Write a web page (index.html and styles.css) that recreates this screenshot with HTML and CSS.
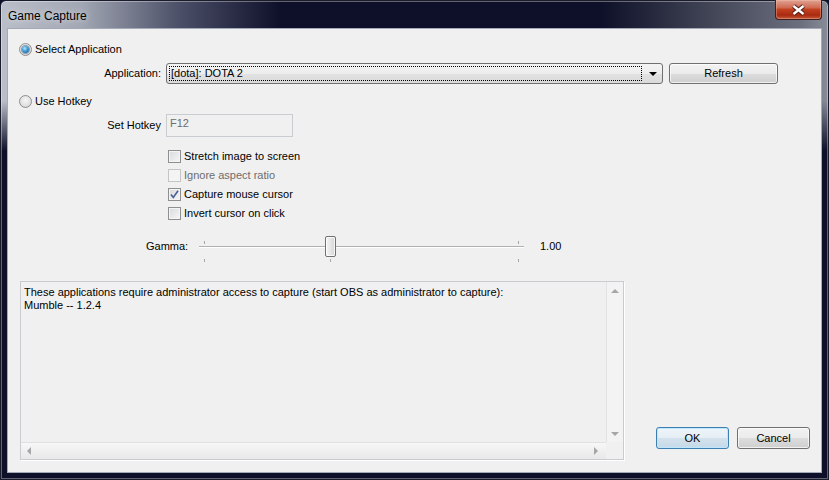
FILE: index.html
```html
<!DOCTYPE html>
<html>
<head>
    <title>Game Capture</title>
    <link rel="stylesheet" href="styles.css">
</head>
<body>
    <div class="window">
        <div class="titlebar">
            <span class="title">Game Capture</span>
            <div class="close">
                <svg width="15" height="12" viewBox="0 0 15 12">
                    <path d="M2.5 2 L12.5 10 M12.5 2 L2.5 10" stroke="#4a1f18" stroke-width="4.4"/>
                    <path d="M2.5 2 L12.5 10 M12.5 2 L2.5 10" stroke="#fff" stroke-width="2.4"/>
                </svg>
            </div>
        </div>
        <div class="client">
            <div class="radio-row first"><span class="radio checked"></span>Select Application</div>
            <div class="field-row app-row">
                <span class="label">Application:</span>
                <div class="combo">
                    <span class="focus">[dota]: DOTA 2</span>
                    <span class="arrow"></span>
                </div>
                <div class="btn refresh">Refresh</div>
            </div>
            <div class="radio-row hotkey-radio"><span class="radio"></span>Use Hotkey</div>
            <div class="field-row hotkey-row">
                <span class="label">Set Hotkey</span>
                <div class="hotkey">F12</div>
            </div>
            <div class="checks">
                <div class="check-row"><span class="checkbox"></span>Stretch image to screen</div>
                <div class="check-row disabled"><span class="checkbox"></span>Ignore aspect ratio</div>
                <div class="check-row">
                    <span class="checkbox">
                        <svg width="9" height="9" viewBox="0 0 9 9">
                            <path d="M1 4.5 L3.3 7.5 L8 0.8" fill="none" stroke="#4a5f97" stroke-width="1.6"/>
                        </svg>
                    </span>Capture mouse cursor
                </div>
                <div class="check-row"><span class="checkbox"></span>Invert cursor on click</div>
            </div>
            <div class="gamma-row">
                <span class="gamma-label">Gamma:</span>
                <div class="slider">
                    <div class="ticks first"></div>
                    <div class="track"></div>
                    <div class="ticks"></div>
                    <span class="thumb"></span>
                </div>
                <span class="gamma-value">1.00</span>
            </div>
            <div class="bottom">
                <div class="log">
                    <div class="log-text">These applications require administrator access to capture (start OBS as administrator to capture):<br>Mumble -- 1.2.4</div>
                    <div class="vbar"><span class="arr up"></span><span class="arr down"></span></div>
                    <div class="hbar"><span class="arr left"></span><span class="arr right"></span></div>
                    <div class="corner"></div>
                </div>
                <div class="actions">
                    <div class="btn default">OK</div>
                    <div class="btn">Cancel</div>
                </div>
            </div>
        </div>
    </div>
</body>
</html>
```

FILE: styles.css
```css
body {
    margin: 0;
    padding: 0;
    font-family: "Liberation Sans", Arial, sans-serif;
    font-size: 11px;
    line-height: 13px;
    color: #000;
    background: #0d1028;
}

.window {
    width: 829px;
    height: 480px;
    box-sizing: border-box;
    padding: 0 6px 6px 6px;
    border: 1px solid #1a1c2c;
    border-radius: 6px 6px 0 0;
    box-shadow: inset 0 0 0 1px rgba(255, 255, 255, 0.35);
    background:
        linear-gradient(180deg, rgba(13, 16, 40, 0) 100px, #0d1028 150px),
        linear-gradient(90deg, #b9bec8 0, #a2a7b4 80px, #4a4e66 180px, #0d1028 280px, #0d1028 600px, #3e4152 700px, #6c6f7e 800px, #8a8d99 829px);
}

/* title bar */
.titlebar {
    height: 27px;
    display: flex;
    justify-content: space-between;
    align-items: flex-start;
    margin: 0 -6px;
    padding: 0 6px 0 7px;
}

.title {
    font-size: 12px;
    line-height: 14px;
    padding-top: 8px;
    color: #000;
    text-shadow: 0 0 6px rgba(255, 255, 255, 0.8);
}

.close {
    width: 45px;
    height: 19px;
    margin-top: -1px;
    border: 1px solid #3e2020;
    border-top: none;
    border-radius: 0 0 4px 4px;
    background: linear-gradient(180deg, #e0a494 0, #d06a52 40%, #c1401f 50%, #a92a12 80%, #c65a3a 100%);
    box-shadow: inset 0 0 0 1px rgba(255, 200, 180, 0.35);
    display: flex;
    justify-content: center;
    align-items: center;
}

/* client area */
.client {
    height: 445px;
    box-sizing: border-box;
    border: 1px solid #a4a9b6;
    background: #f0f0f0;
    padding: 0 11px 0 11px;
}

.radio-row {
    display: flex;
    align-items: center;
    height: 13px;
}

.radio-row.first {
    margin-top: 14px;
}

.hotkey-radio {
    margin-top: 11px;
}

.radio {
    width: 11px;
    height: 11px;
    border: 1px solid #8e8f8f;
    border-radius: 50%;
    background: radial-gradient(circle at 50% 40%, #f6f6f6 0, #e1e1e1 60%, #c8c8c8 100%);
    margin-right: 3px;
    display: flex;
    justify-content: center;
    align-items: center;
}

.radio.checked::after {
    content: "";
    width: 7px;
    height: 7px;
    border-radius: 50%;
    background: radial-gradient(circle at 40% 35%, #b8e6fb 0, #3b9ad6 45%, #1b4f87 100%);
    box-shadow: 0 0 0 1px rgba(40, 80, 130, 0.5);
}

.field-row {
    display: flex;
    align-items: center;
}

.field-row .label {
    width: 147px;
    box-sizing: border-box;
    padding-right: 5px;
    text-align: right;
}

.app-row {
    margin-top: 7px;
}

.combo {
    width: 497px;
    height: 21px;
    box-sizing: border-box;
    border: 1px solid #707070;
    border-radius: 3px;
    background: linear-gradient(180deg, #f4f4f4 0, #ededed 50%, #e2e2e2 51%, #dadada 100%);
    display: flex;
    align-items: center;
    padding: 0 0 0 2px;
    margin-right: 6px;
}

.focus {
    width: 473px;
    height: 15px;
    box-sizing: border-box;
    border: 1px dotted #000;
    padding-left: 1px;
    line-height: 13px;
}

.arrow {
    margin-left: 7px;
    width: 0;
    height: 0;
    border-left: 4px solid transparent;
    border-right: 4px solid transparent;
    border-top: 4px solid #000;
}

.btn {
    height: 21px;
    box-sizing: border-box;
    border: 1px solid #707070;
    border-radius: 3px;
    background: linear-gradient(180deg, #f2f2f2 0, #ebebeb 50%, #dddddd 51%, #cfcfcf 100%);
    box-shadow: inset 0 0 0 1px rgba(255, 255, 255, 0.7);
    display: flex;
    justify-content: center;
    align-items: center;
    width: 73px;
}

.refresh {
    width: 109px;
}

.btn.default {
    border-color: #3c7fb1;
    background: linear-gradient(180deg, #eef5fa 0, #e4eef5 50%, #d3e2ed 51%, #c6d9e7 100%);
    box-shadow: inset 0 0 0 1px #bfe6fb;
}

.hotkey-row {
    margin-top: 6px;
}

.hotkey {
    width: 127px;
    height: 23px;
    box-sizing: border-box;
    border: 1px solid #c9cdd1;
    background: #f0f0f0;
    color: #6d6d6d;
    padding: 2px 0 0 3px;
}

/* checkboxes */
.checks {
    margin-top: 10px;
    padding-left: 149px;
}

.check-row {
    height: 19px;
    display: flex;
    align-items: center;
}

.checkbox {
    width: 11px;
    height: 11px;
    border: 1px solid #8e8f8f;
    background: linear-gradient(135deg, #d8dadd 0, #f6f6f6 100%);
    box-shadow: inset 0 0 0 1px #f4f4f4;
    margin-right: 3px;
    display: flex;
    justify-content: center;
    align-items: center;
}

.check-row.disabled {
    color: #6d6d6d;
}

.check-row.disabled .checkbox {
    border-color: #c5c5c5;
    background: #f4f4f4;
}

/* gamma slider */
.gamma-row {
    display: flex;
    align-items: flex-start;
    margin-top: 13px;
    height: 28px;
}

.gamma-label {
    margin-left: 127px;
    width: 40px;
    padding-top: 4px;
    margin-right: 13px;
}

.slider {
    position: relative;
    width: 325px;
    height: 28px;
}

.ticks {
    height: 3px;
    background:
        linear-gradient(#a8a8a8, #a8a8a8) 5px 0 / 1px 3px no-repeat,
        linear-gradient(#a8a8a8, #a8a8a8) 131px 0 / 1px 3px no-repeat,
        linear-gradient(#a8a8a8, #a8a8a8) 319px 0 / 1px 3px no-repeat;
}

.ticks.first {
    margin-top: 5px;
}

.track {
    margin-top: 2px;
    height: 1px;
    background: #b0b0b0;
    border-bottom: 1px solid #ffffff;
    margin-bottom: 11px;
}

.thumb {
    position: absolute;
    left: 126px;
    top: 0;
    width: 11px;
    height: 21px;
    box-sizing: border-box;
    border: 1px solid #707070;
    border-radius: 2px;
    background: linear-gradient(90deg, #f5f5f5 0, #e6e6e6 50%, #d6d6d6 100%);
    box-shadow: inset 0 0 0 1px rgba(255, 255, 255, 0.8);
}

.gamma-value {
    margin-left: 16px;
    padding-top: 4px;
}

/* bottom: log and buttons */
.bottom {
    margin-top: 17px;
    display: flex;
    justify-content: space-between;
    align-items: flex-end;
}

.log {
    margin-left: 1px;
    width: 604px;
    height: 179px;
    box-sizing: border-box;
    border: 1px solid #c9cbce;
    box-shadow: 1px 1px 0 #ffffff;
    display: grid;
    grid-template-columns: 585px 17px;
    grid-template-rows: 160px 17px;
}

.log-text {
    padding: 4px 0 0 3px;
    white-space: nowrap;
    overflow: hidden;
}

.vbar {
    background: #f3f3f3;
    border-left: 1px solid #e2e2e2;
    display: flex;
    flex-direction: column;
    justify-content: space-between;
    align-items: center;
    padding: 7px 0 6px;
}

.hbar {
    background: linear-gradient(180deg, #f7f7f7 0, #e8e8e8 100%);
    border-top: 1px solid #e0e0e0;
    display: flex;
    justify-content: space-between;
    align-items: center;
    padding: 0 8px 0 6px;
}

.corner {
    background: #f0f0f0;
}

.arr {
    width: 0;
    height: 0;
}

.arr.up {
    border-left: 4px solid transparent;
    border-right: 4px solid transparent;
    border-bottom: 4px solid #a6a6a6;
}

.arr.down {
    border-left: 4px solid transparent;
    border-right: 4px solid transparent;
    border-top: 4px solid #a6a6a6;
}

.arr.left {
    border-top: 4px solid transparent;
    border-bottom: 4px solid transparent;
    border-right: 4px solid #a6a6a6;
}

.arr.right {
    border-top: 4px solid transparent;
    border-bottom: 4px solid transparent;
    border-left: 4px solid #a6a6a6;
}

.actions {
    display: flex;
    gap: 8px;
    margin-bottom: 11px;
}

.actions .btn {
    height: 22px;
}
```
